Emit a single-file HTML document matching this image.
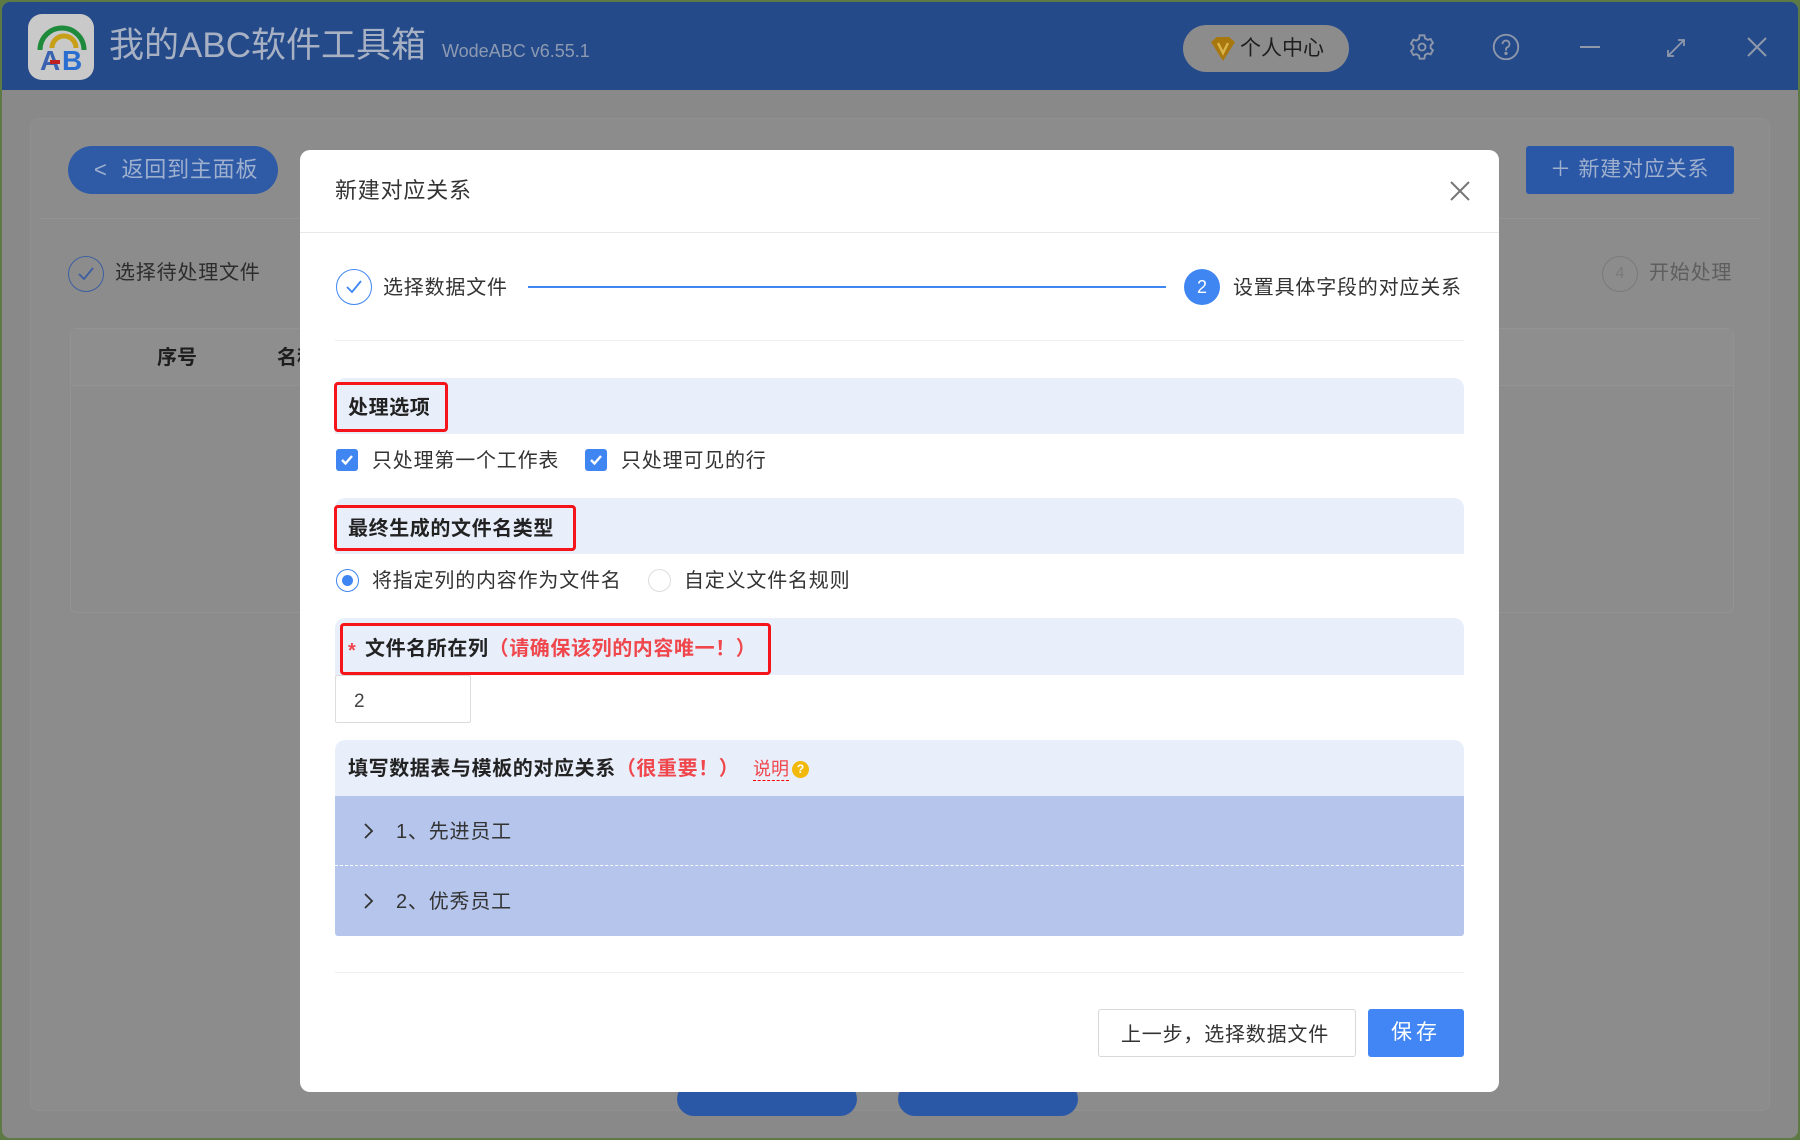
<!DOCTYPE html>
<html><head><meta charset="utf-8"><style>
*{margin:0;padding:0;box-sizing:border-box}
body{width:1800px;height:1140px;overflow:hidden;background:#5d7a45;font-family:"Liberation Sans","Noto Sans CJK SC",sans-serif;position:relative}
.abs{position:absolute}
.win{left:2px;top:2px;width:1796px;height:1136px;background:#898989;border-radius:8px;overflow:hidden}
.hdr{left:0;top:0;width:1796px;height:88px;background:#244a89}
.t{position:absolute;white-space:nowrap;line-height:1}
.sp{letter-spacing:0.8px}
.sec{position:absolute;left:335px;width:1129px;background:#e8effb;border-radius:10px 10px 0 0}
.red{position:absolute;border:3px solid #f5141a;border-radius:4px}
.b{font-weight:bold;color:#222;font-size:20px;letter-spacing:0.6px}
.chk{position:absolute;width:22px;height:22px;background:#3f86f2;border-radius:3px}
.n{font-size:20px;color:#333;letter-spacing:0.8px}
</style></head><body>
<div class="abs win">
 <div class="abs hdr"></div>
 <div class="abs" style="left:26px;top:12px;width:66px;height:66px;background:#c9c9c9;border-radius:14px"></div>
 <svg class="abs" style="left:30px;top:18px" width="60" height="56" viewBox="0 0 60 56"><path d="M8 30 A22 22 0 0 1 52 30" fill="none" stroke="#1e8a3c" stroke-width="5"/><path d="M20 28 A12 12 0 0 1 44 28" fill="none" stroke="#c8a018" stroke-width="5"/><text x="8" y="50" font-size="28" font-weight="bold" fill="#3a62b0" font-family="Liberation Sans">A</text><text x="30" y="50" font-size="28" font-weight="bold" fill="#2a6ed0" font-family="Liberation Sans">B</text><rect x="18" y="40" width="10" height="4" fill="#c02020"/></svg>
 <div class="t" style="left:107px;top:26px;font-size:35px;color:#a7b1c3">我的ABC软件工具箱</div>
 <div class="t" style="left:440px;top:40px;font-size:18px;color:#8d9ab2">WodeABC v6.55.1</div>
 <div class="abs" style="left:1181px;top:23px;width:166px;height:47px;background:#8c8c8c;border-radius:24px"></div>
 <svg class="abs" style="left:1207px;top:34px" width="28" height="26" viewBox="0 0 28 26"><path d="M2 6 L8 1 H20 L26 6 L14 25 Z" fill="#a8780f"/><path d="M9 7 L14 17 L19 7" fill="none" stroke="#d9b24a" stroke-width="2.5"/></svg>
 <div class="t" style="left:1238px;top:36px;font-size:21px;color:#1e1e1e">个人中心</div>
 <svg class="abs" style="left:1406px;top:31px" width="28" height="28" viewBox="0 0 24 24" fill="none" stroke="#8f98ab" stroke-width="1.6"><circle cx="12" cy="12" r="3"/><path d="M10 2h4l.6 2.6 2.3 1.3 2.5-.8 2 3.5-2 1.8v2.6l2 1.8-2 3.5-2.5-.8-2.3 1.3L14 22h-4l-.6-2.6-2.3-1.3-2.5.8-2-3.5 2-1.8v-2.6l-2-1.8 2-3.5 2.5.8 2.3-1.3z"/></svg>
 <svg class="abs" style="left:1490px;top:31px" width="28" height="28" viewBox="0 0 24 24" fill="none" stroke="#8f98ab" stroke-width="1.6"><circle cx="12" cy="12" r="10.5"/><path d="M9 9.5a3 3 0 1 1 4 2.8c-.8.4-1 1-1 2v.7"/><circle cx="12" cy="17.5" r=".6" fill="#8f98ab"/></svg>
 <div class="abs" style="left:1578px;top:44px;width:20px;height:2px;background:#8f98ab"></div>
 <svg class="abs" style="left:1662px;top:34px" width="24" height="24" viewBox="0 0 24 24" fill="none" stroke="#8f98ab" stroke-width="1.8"><path d="M4 20L20 4M14 4h6v6M4 14v6h6"/></svg>
 <svg class="abs" style="left:1744px;top:34px" width="22" height="22" viewBox="0 0 22 22" stroke="#8f98ab" stroke-width="2"><path d="M2 2L20 20M20 2L2 20"/></svg>
 <div class="abs" style="left:28px;top:116px;width:1740px;height:993px;background:#8c8c8c;border-radius:8px;border:1px solid #909090"></div>
 <div class="abs" style="left:66px;top:144px;width:210px;height:48px;background:#2e5aa6;border-radius:24px"></div>
 <div class="t sp" style="left:92px;top:157px;font-size:22px;color:#9fb0cf">&lt;&nbsp; 返回到主面板</div>
 <div class="abs" style="left:1524px;top:144px;width:208px;height:48px;background:#2b58a6;border-radius:3px"></div>
 <div class="t sp" style="left:1548px;top:157px;font-size:21px;color:#9fb0cf">＋ 新建对应关系</div>
 <div class="abs" style="left:38px;top:216px;width:1720px;height:1px;background:#939393"></div>
 <div class="abs" style="left:66px;top:254px;width:36px;height:36px;border:1.5px solid #3d5fa0;border-radius:50%"></div>
 <svg class="abs" style="left:74px;top:264px" width="20" height="16" viewBox="0 0 20 16" fill="none" stroke="#3d5fa0" stroke-width="1.8"><path d="M3 8l5 5 9-11"/></svg>
 <div class="t sp" style="left:113px;top:261px;font-size:20px;color:#2c2c2c">选择待处理文件</div>
 <div class="abs" style="left:1600px;top:254px;width:36px;height:36px;border:1.5px solid #7a7a7a;border-radius:50%;font-size:16px;color:#7a7a7a;text-align:center;line-height:33px">4</div>
 <div class="t sp" style="left:1647px;top:261px;font-size:20px;color:#5e5e5e">开始处理</div>
 <div class="abs" style="left:68px;top:326px;width:1664px;height:285px;border:1px solid #939393;border-radius:6px"></div>
 <div class="abs" style="left:69px;top:327px;width:1662px;height:57px;background:#8e8e8e;border-bottom:1px solid #939393"></div>
 <div class="t" style="left:155px;top:346px;font-size:20px;font-weight:bold;color:#1e1e1e">序号</div>
 <div class="t" style="left:275px;top:346px;font-size:20px;font-weight:bold;color:#1e1e1e">名称</div>
 <div class="abs" style="left:675px;top:1080px;width:180px;height:34px;background:#2b58a6;border-radius:17px"></div>
 <div class="abs" style="left:896px;top:1080px;width:180px;height:34px;background:#2b58a6;border-radius:17px"></div>
</div>
<div class="abs" style="left:300px;top:150px;width:1199px;height:942px;background:#fff;border-radius:10px"></div>
<div class="t sp" style="left:335px;top:180px;font-size:22px;color:#333">新建对应关系</div>
<svg class="abs" style="left:1450px;top:181px" width="20" height="20" viewBox="0 0 20 20" stroke="#777" stroke-width="2"><path d="M1 1L19 19M19 1L1 19"/></svg>
<div class="abs" style="left:300px;top:232px;width:1199px;height:1px;background:#e8e8e8"></div>
<div class="abs" style="left:336px;top:269px;width:36px;height:36px;border:1.5px solid #3f86f2;border-radius:50%"></div>
<svg class="abs" style="left:344px;top:279px" width="20" height="16" viewBox="0 0 20 16" fill="none" stroke="#3f86f2" stroke-width="1.8"><path d="M3 8l5 5 9-11"/></svg>
<div class="t n" style="left:383px;top:278px">选择数据文件</div>
<div class="abs" style="left:528px;top:286px;width:638px;height:1.5px;background:#3f86f2"></div>
<div class="abs" style="left:1184px;top:269px;width:36px;height:36px;background:#3f86f2;border-radius:50%;color:#fff;font-size:18px;text-align:center;line-height:36px">2</div>
<div class="t n" style="left:1233px;top:278px">设置具体字段的对应关系</div>
<div class="abs" style="left:335px;top:340px;width:1129px;height:1px;background:#eee"></div>

<div class="sec" style="top:378px;height:56px"></div>
<div class="red" style="left:334px;top:382px;width:114px;height:50px"></div>
<div class="t b" style="left:348px;top:398px">处理选项</div>
<div class="chk" style="left:336px;top:449px"></div>
<svg class="abs" style="left:340px;top:453px" width="14" height="14" viewBox="0 0 14 14" fill="none" stroke="#fff" stroke-width="2.4"><path d="M2 7l3.5 3.5L12 3"/></svg>
<div class="t n" style="left:372px;top:451px">只处理第一个工作表</div>
<div class="chk" style="left:585px;top:449px"></div>
<svg class="abs" style="left:589px;top:453px" width="14" height="14" viewBox="0 0 14 14" fill="none" stroke="#fff" stroke-width="2.4"><path d="M2 7l3.5 3.5L12 3"/></svg>
<div class="t n" style="left:621px;top:451px">只处理可见的行</div>

<div class="sec" style="top:498px;height:56px"></div>
<div class="red" style="left:334px;top:505px;width:242px;height:46px"></div>
<div class="t b" style="left:348px;top:519px">最终生成的文件名类型</div>
<div class="abs" style="left:336px;top:569px;width:23px;height:23px;border:1.5px solid #3f86f2;border-radius:50%"></div>
<div class="abs" style="left:342px;top:575px;width:11px;height:11px;background:#3f86f2;border-radius:50%"></div>
<div class="t n" style="left:372px;top:571px">将指定列的内容作为文件名</div>
<div class="abs" style="left:648px;top:569px;width:23px;height:23px;border:1.5px solid #ddd;border-radius:50%"></div>
<div class="t n" style="left:684px;top:571px">自定义文件名规则</div>

<div class="sec" style="top:618px;height:57px"></div>
<div class="red" style="left:340px;top:623px;width:431px;height:52px"></div>
<div class="t" style="left:348px;top:641px;font-size:20px;color:#f0474d;font-weight:bold">*</div>
<div class="t b" style="left:365px;top:639px">文件名所在列<span style="color:#f0474d">（请确保该列的内容唯一！）</span></div>
<div class="abs" style="left:335px;top:675px;width:136px;height:48px;border:1px solid #dcdcdc;border-radius:2px"></div>
<div class="t" style="left:354px;top:692px;font-size:19px;color:#444">2</div>

<div class="sec" style="top:740px;height:56px"></div>
<div class="t b" style="left:348px;top:759px">填写数据表与模板的对应关系<span style="color:#f0474d">（很重要！）</span></div>
<div class="t" style="left:753px;top:760px;font-size:18px;color:#f0474d;border-bottom:1.5px dashed #f00;padding-bottom:2px">说明</div>
<div class="abs" style="left:792px;top:761px;width:17px;height:17px;background:#f2b90b;border-radius:50%;color:#fff;font-size:12px;text-align:center;line-height:17px;font-weight:bold">?</div>
<div class="abs" style="left:335px;top:796px;width:1129px;height:140px;background:#b5c5ec;border-radius:0 0 3px 3px"></div>
<div class="abs" style="left:335px;top:865px;width:1129px;height:0;border-top:1.5px dashed #fff"></div>
<svg class="abs" style="left:363px;top:822px" width="12" height="18" viewBox="0 0 12 18" fill="none" stroke="#333" stroke-width="1.8"><path d="M2 2l7 7-7 7"/></svg>
<div class="t n" style="left:396px;top:822px">1、先进员工</div>
<svg class="abs" style="left:363px;top:892px" width="12" height="18" viewBox="0 0 12 18" fill="none" stroke="#333" stroke-width="1.8"><path d="M2 2l7 7-7 7"/></svg>
<div class="t n" style="left:396px;top:892px">2、优秀员工</div>

<div class="abs" style="left:335px;top:972px;width:1129px;height:1px;background:#eee"></div>
<div class="abs" style="left:1098px;top:1009px;width:258px;height:48px;border:1px solid #d8d8d8;border-radius:3px;background:#fff"></div>
<div class="t n" style="left:1121px;top:1025px">上一步，选择数据文件</div>
<div class="abs" style="left:1368px;top:1009px;width:96px;height:48px;background:#4186f4;border-radius:3px;color:#fff;font-size:21px;text-align:center;line-height:48px;letter-spacing:4px">保存</div>
</body></html>
